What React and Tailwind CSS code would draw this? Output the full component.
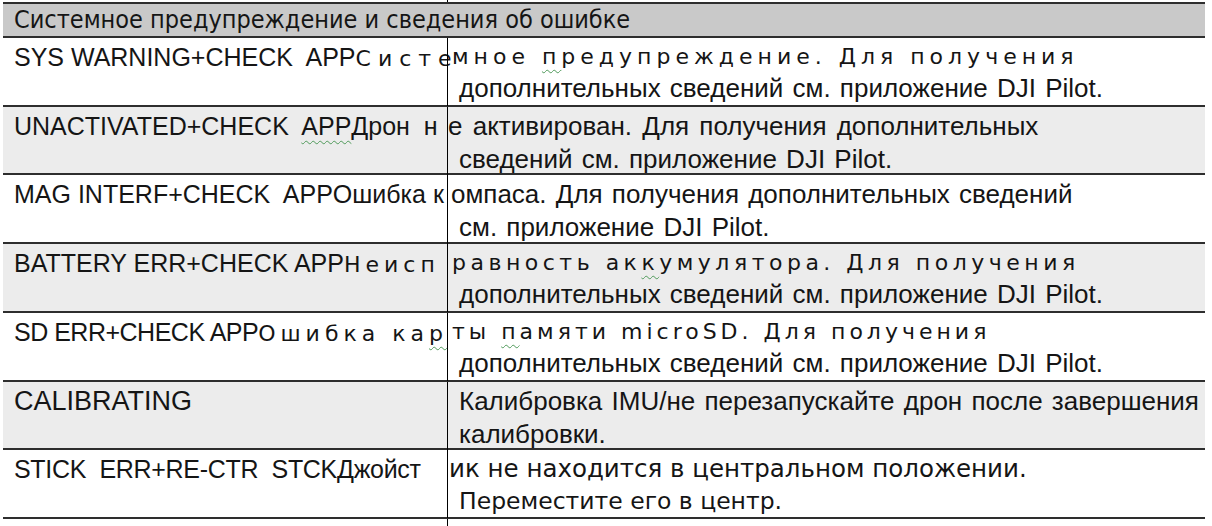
const N = "font-['Liberation_Sans_Narrow','Liberation_Sans',Arial,sans-serif] text-[25px]";
const NR = "font-['Liberation_Sans_Narrow','Liberation_Sans',Arial,sans-serif] text-[26px] [word-spacing:2px]";
const S = "font-['DejaVu_Sans',Verdana,sans-serif] text-[22px]";
const D = "font-['DejaVu_Sans',Verdana,sans-serif]";
const W = "underline decoration-wavy decoration-[#4f9a5a] decoration-1 underline-offset-[5px]";

const Row = ({ bg = "bg-white", h, left, r1, r2, r1Pad = "pl-[11px]" }) => (
  <div className={`grid grid-cols-[444px_1fr] border-b-2 border-[#2e2e2e] ${bg} ${h}`}>
    <div className="pl-[11px] pt-[4px] leading-[30px] whitespace-pre">{left}</div>
    <div className="border-l border-black pt-[4px] leading-[30px] whitespace-pre">
      <div className={r1Pad}>{r1}</div>
      <div className="pl-[11px]">{r2}</div>
    </div>
  </div>
);

const more = <span className={NR}>дополнительных сведений см. приложение DJI Pilot.</span>;

export default function App() {
  return (
    <div className="min-h-screen bg-white text-[#151515]">
      <div className="ml-[3px] w-[1202px]">
        <div className="grid grid-cols-[444px_1fr] h-[2px]">
          <div />
          <div className="border-l border-black" />
        </div>

        <div className="h-[36px] bg-[#c9c9c9] border-y-2 border-[#2e2e2e] pl-[11px] leading-[32px] whitespace-nowrap font-['DejaVu_Sans_Condensed','DejaVu_Sans',sans-serif] text-[25px]">
          Системное предупреждение и сведения об ошибке
        </div>

        <Row
          h="h-[69px]"
          left={<><span className={N}>SYS WARNING+CHECK  APP</span><span className={`${S} tracking-[7px]`}>Систе</span></>}
          r1Pad="pl-[4px]"
          r1={<span className={`${S} tracking-[5px]`}>мное <span className={W}>п</span>редупреждение. Для получения</span>}
          r2={more}
        />
        <Row
          h="h-[68px]"
          bg="bg-[#ececec]"
          left={<span className={N}>UNACTIVATED+CHECK  <span className={W}>APP</span>Дрон  н</span>}
          r1Pad="pl-0"
          r1={<span className={`${NR} [word-spacing:3px]`}>е активирован. Для получения дополнительных</span>}
          r2={<span className={NR}>сведений см. приложение DJI Pilot.</span>}
        />
        <Row
          h="h-[69px]"
          left={<span className={N}>MAG INTERF+CHECK  APPОшибка к</span>}
          r1Pad="pl-[3px]"
          r1={<span className={NR}>омпаса. Для получения дополнительных сведений</span>}
          r2={<span className={NR}>см. приложение DJI Pilot.</span>}
        />
        <Row
          h="h-[69px]"
          bg="bg-[#ececec]"
          left={<><span className={N}>BATTERY ERR+CHECK APP</span><span className={`${S} tracking-[5px]`}>Неисп</span></>}
          r1Pad="pl-[4px]"
          r1={<span className={`${S} tracking-[4.5px]`}>равность ак<span className={W}>к</span>умулятора. Для получения</span>}
          r2={more}
        />
        <Row
          h="h-[69px]"
          left={<><span className={`${N} tracking-[-0.5px]`}>SD ERR+CHECK APP</span><span className={`${S} tracking-[5px]`}>Ошибка ка<span className={W}>р</span></span></>}
          r1Pad="pl-[4px]"
          r1={<span className={`${S} tracking-[4px]`}>ты <span className={W}>п</span>амяти microSD. Для получения</span>}
          r2={more}
        />
        <Row
          h="h-[68px]"
          bg="bg-[#ececec]"
          left={<span className={`${N} text-[27px]`}>CALIBRATING</span>}
          r1={<span className={NR}>Калибровка IMU/не перезапускайте дрон после завершения</span>}
          r2={<span className={NR}>калибровки.</span>}
        />
        <Row
          h="h-[69px]"
          left={<span className={`${N} text-[23px] tracking-[-0.3px]`}>STICK  ERR+RE-CTR  STCKДжойст</span>}
          r1Pad="pl-[1px]"
          r1={<span className={`${D} text-[24.5px]`}>ик не находится в центральном положении.</span>}
          r2={<span className={`${D} text-[23.5px]`}>Переместите его в центр.</span>}
        />

        <div className="grid grid-cols-[444px_1fr] h-[8px]">
          <div />
          <div className="border-l border-black" />
        </div>
      </div>
    </div>
  );
}
